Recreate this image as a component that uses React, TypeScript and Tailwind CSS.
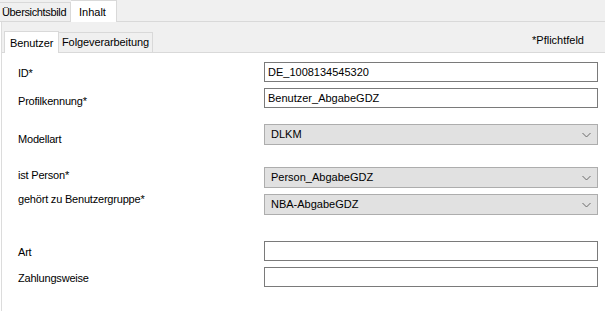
import React from "react";

const font = { fontFamily: '"Liberation Sans", Arial, sans-serif' };

function Chevron() {
  return (
    <svg width="9" height="6" viewBox="0 0 9 6" className="shrink-0">
      <path d="M0.5 1 L4.5 5 L8.5 1" fill="none" stroke="#6a6a6a" strokeWidth="1" />
    </svg>
  );
}

function TextInput({ value, h }: { value?: string; h: string }) {
  return (
    <div className={`ml-[246px] w-[334px] ${h} border border-[#7a7a7a] bg-white flex items-center pl-[3px] text-[11px] text-black`}>
      {value}
    </div>
  );
}

function Select({ value }: { value: string }) {
  return (
    <div className="ml-[246px] w-[334px] h-[21px] border border-[#adadad] bg-[#e1e1e1] flex items-center justify-between pl-[6px] pr-[6px] text-[11px] text-black">
      <span>{value}</span>
      <Chevron />
    </div>
  );
}

function Row({
  label,
  mt,
  lt,
  children,
}: {
  label: string;
  mt: string;
  lt: string;
  children: React.ReactNode;
}) {
  return (
    <div className={`flex items-start ${mt}`}>
      <div className={`w-0 whitespace-nowrap ${lt} leading-[13px] text-[11px] tracking-[-0.2px] text-black ml-[16px]`}>{label}</div>
      {children}
    </div>
  );
}

export default function App() {
  return (
    <div className="w-[605px] h-[311px] bg-white overflow-hidden flex flex-col" style={font}>
      {/* outer tabs */}
      <div className="h-[22px] bg-[#f0f0f0] flex items-end border-b border-[#d9d9d9] shrink-0">
        <div className="h-[20px] w-[71px] border border-b-0 border-l-0 border-[#d9d9d9] flex items-center pl-[2px] text-[11px] tracking-[-0.35px] whitespace-nowrap overflow-hidden text-black -mb-px">
          Übersichtsbild
        </div>
        <div className="h-[22px] w-[46px] bg-white border border-b-0 border-l-0 border-[#d9d9d9] flex items-start pt-[3px] pl-[8px] text-[11px] text-black -mb-px">
          Inhalt
        </div>
      </div>
      {/* body */}
      <div className="flex-1 flex flex-col border-l border-[#dcdcdc] ml-px">
        <div className="h-[31px] bg-[#f0f0f0] flex items-end justify-between border-b border-[#d9d9d9] shrink-0 pl-[2px]">
          <div className="flex items-end">
            <div className="h-[22px] w-[55px] bg-white border border-b-0 border-[#d9d9d9] flex items-start pt-[3px] pl-[5px] text-[11px] tracking-[-0.1px] text-black -mb-px">
              Benutzer
            </div>
            <div className="h-[20px] w-[94px] border border-b-0 border-l-0 border-[#d9d9d9] flex items-center pl-[3px] text-[11px] tracking-[-0.1px] text-black">
              Folgeverarbeitung
            </div>
          </div>
          <div className="self-start mt-[10px] mr-[21px] text-[11px] text-black">*Pflichtfeld</div>
        </div>
        <div className="flex flex-col">
          <Row label="ID*" mt="mt-[9px]" lt="mt-[5px]">
            <TextInput value="DE_1008134545320" h="h-[20px]" />
          </Row>
          <Row label="Profilkennung*" mt="mt-[6px]" lt="mt-[7px]">
            <TextInput value="Benutzer_AbgabeGDZ" h="h-[20px]" />
          </Row>
          <Row label="Modellart" mt="mt-[16px]" lt="mt-[9px]">
            <Select value="DLKM" />
          </Row>
          <Row label="ist Person*" mt="mt-[21px]" lt="mt-[2px]">
            <Select value="Person_AbgabeGDZ" />
          </Row>
          <Row label="gehört zu Benutzergruppe*" mt="mt-[6px]" lt="mt-[-1px]">
            <Select value="NBA-AbgabeGDZ" />
          </Row>
          <Row label="Art" mt="mt-[26px]" lt="mt-[5px]">
            <TextInput h="h-[20px]" />
          </Row>
          <Row label="Zahlungsweise" mt="mt-[6px]" lt="mt-[5px]">
            <TextInput h="h-[20px]" />
          </Row>
        </div>
      </div>
    </div>
  );
}
